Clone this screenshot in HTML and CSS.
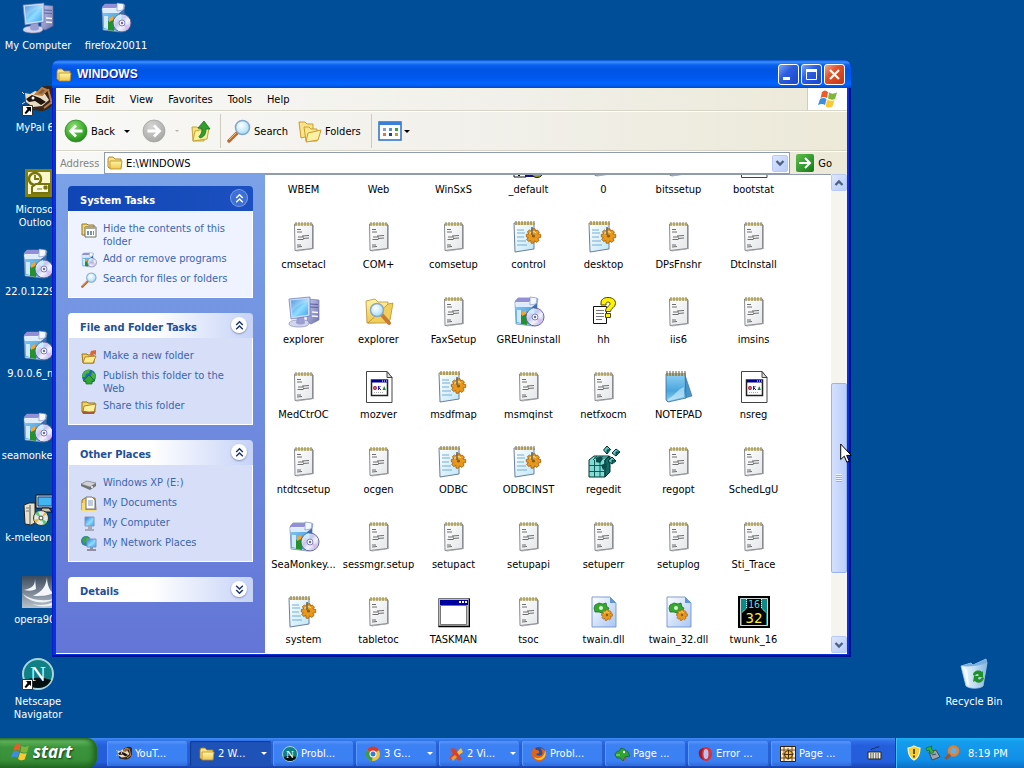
FILE: index.html
```html
<!DOCTYPE html>
<html lang="en">
<head>
    <meta charset="UTF-8">
    <meta name="viewport" content="width=device-width, initial-scale=1.0">
    <title>WINDOWS</title>
    <link rel="stylesheet" href="styles.css">
</head>
<body>
    <!-- shared icons -->
    <svg class="sprite" aria-hidden="true">
        <defs>
            <linearGradient id="gScreen" x1="0" y1="0" x2="1" y2="1"><stop offset="0" stop-color="#1f78d8"/><stop offset=".55" stop-color="#8fdcff"/><stop offset="1" stop-color="#3fa2ee"/></linearGradient>
            <linearGradient id="gCase" x1="0" y1="0" x2="1" y2="1"><stop offset="0" stop-color="#c9ccf0"/><stop offset="1" stop-color="#6c70a8"/></linearGradient>
            <linearGradient id="gFolder" x1="0" y1="0" x2="0" y2="1"><stop offset="0" stop-color="#fff6a8"/><stop offset="1" stop-color="#f0c64c"/></linearGradient>
            <linearGradient id="gPaper" x1="0" y1="0" x2="1" y2="1"><stop offset="0" stop-color="#ffffff"/><stop offset="1" stop-color="#e4e6e8"/></linearGradient>
            <linearGradient id="gIni" x1="0" y1="0" x2="1" y2="1"><stop offset="0" stop-color="#ffffff"/><stop offset="1" stop-color="#bfe6f8"/></linearGradient>
            <linearGradient id="gNote" x1="0" y1="0" x2="0" y2="1"><stop offset="0" stop-color="#8fd0f4"/><stop offset=".6" stop-color="#4aa5dc"/><stop offset="1" stop-color="#8ecdf0"/></linearGradient>
            <linearGradient id="gDisc" x1="0" y1="0" x2="1" y2="1"><stop offset="0" stop-color="#ffffff"/><stop offset=".4" stop-color="#c5c6ee"/><stop offset=".6" stop-color="#f4f4ff"/><stop offset="1" stop-color="#9b9bd0"/></linearGradient>
            <linearGradient id="gBox" x1="0" y1="0" x2="1" y2="1"><stop offset="0" stop-color="#7cc4f0"/><stop offset="1" stop-color="#3f92d8"/></linearGradient>
            <linearGradient id="gDll" x1="0" y1="0" x2="1" y2="1"><stop offset="0" stop-color="#ffffff"/><stop offset="1" stop-color="#a9c6f6"/></linearGradient>
            <linearGradient id="gBin" x1="0" y1="0" x2="1" y2="0"><stop offset="0" stop-color="#f5fbff"/><stop offset=".5" stop-color="#c4dff2"/><stop offset="1" stop-color="#86b8e0"/></linearGradient>
            <linearGradient id="gIs" x1="0" y1="0" x2="0" y2="1"><stop offset="0" stop-color="#3b4a5c"/><stop offset="1" stop-color="#b9c2cc"/></linearGradient>
            <radialGradient id="gGreen" cx=".4" cy=".3" r=".8"><stop offset="0" stop-color="#8be070"/><stop offset=".6" stop-color="#3dab2c"/><stop offset="1" stop-color="#1d7c17"/></radialGradient>
            <radialGradient id="gGrey" cx=".4" cy=".3" r=".8"><stop offset="0" stop-color="#d6d6d4"/><stop offset="1" stop-color="#a2a2a0"/></radialGradient>
            <radialGradient id="gLens" cx=".4" cy=".35" r=".7"><stop offset="0" stop-color="#ffffff"/><stop offset="1" stop-color="#9fdcf6"/></radialGradient>
        </defs>

        <symbol id="computer" viewBox="0 0 32 32">
            <path d="M20 3l11 1v20l-8 4-4-2z" fill="url(#gCase)" stroke="#6a6ea0" stroke-width=".6"/>
            <path d="M22 8l8 .5M22 11l8 .5" stroke="#5c60a0" stroke-width="1"/>
            <path d="M24 16l6 .5M24 20l6 .5" stroke="#f4f5ff" stroke-width="1.600"/>
            <path d="M1 28c0-3 4-4 10-4s10 0 10 3-5 4-10 4-10-1-10-3z" fill="#d3d5ee" stroke="#787ba8" stroke-width=".6"/>
            <path d="M9 20h7l1 7c-2 2-7 2-9 0z" fill="#9a9ed0"/>
            <path d="M1 3l21-2v19L3 23z" fill="#cfdcf8" stroke="#5a72b4" stroke-width=".7"/>
            <path d="M3 4.500l17-1.500v15.500L4.500 21z" fill="url(#gScreen)"/>
            <path d="M3 4.500l17-1.500v3C13 7 8 10 4.500 16z" fill="#fff" opacity=".25"/>
        </symbol>
        <symbol id="installer" viewBox="0 0 32 32">
            <path d="M2 6L5 2h15l5 1-1 5v20l-4 2L3 28z" fill="#e6effc" stroke="#5f7cae" stroke-width=".7"/>
            <path d="M3 11h16v18L3 27z" fill="url(#gBox)"/>
            <path d="M19 11l5-4v20l-5 3z" fill="#3c70b4"/>
            <path d="M2 5l3-3h14l-3 4H2z" fill="#938fd6"/>
            <path d="M2 7h16l1 4H3z" fill="#dcecff"/>
            <path d="M17 1l7 1-1 6-6 1z" fill="#f4f8ff" stroke="#6f88bc" stroke-width=".6"/>
            <path d="M4 14v12l4 1V14z" fill="#cfeaff"/>
            <path d="M8 19l6-2v12l-6-1z" fill="#24922c"/><path d="M9 16l4-2v4l-4 2z" fill="#f5a42c"/>
            <circle cx="22" cy="21" r="9" fill="url(#gDisc)" stroke="#5a5c94" stroke-width=".9"/>
            <path d="M22 21l-6-6a9 9 0 0 1 5-3z" fill="#c8f0ff" opacity=".9"/><path d="M22 21l5 7a9 9 0 0 0 3-4z" fill="#d9b8f0" opacity=".8"/>
            <circle cx="22" cy="21" r="3" fill="#f8f8ff" stroke="#7577ac" stroke-width=".9"/><circle cx="22" cy="21" r="1.200" fill="#6a6ca0"/>
        </symbol>
        <symbol id="text" viewBox="0 0 32 32">
            <path d="M8 30l17-2.500V4h.8v24L9 30.500z" fill="#a5a7aa"/>
            <path d="M6.500 3h18v24.500L7 29.500z" fill="url(#gPaper)" stroke="#7c7f84" stroke-width=".9"/>
            <path d="M7 2h17v2.500H7z" fill="#d8cf8c"/>
            <path d="M8 1v4M11 1v4M14 1v4M17 1v4M20 1v4M23 1v4" stroke="#7e7448" stroke-width=".9"/>
            <path d="M9 8.500h4M9 11h5M10 16h6M14 15l7-.5M9.500 18.500h6M15 17.500l6-.5M9 24h4M9 26l5-.5" stroke="#4b4b4b" stroke-width=".8"/>
        </symbol>
        <symbol id="gear" viewBox="0 0 20 20">
            <path d="M8 1h4l.5 3 2-1.500 3 2.500-2 2.500 3.500.5v4l-3.500.5 1.500 3-3 2.500-2.500-2L10 19H7l-.5-3.500L4 17l-2.500-3 2-2L1 11V8l3-.5L2.500 4.500l2.500-2 2.500 2z" fill="#e8991c" stroke="#9c5a0c" stroke-width="1"/>
            <path d="M5 7c2-3 6-3 8-1" stroke="#ffd868" stroke-width="1.500" fill="none"/>
            <circle cx="10" cy="10" r="2" fill="#8f5a14"/>
        </symbol>
        <symbol id="ini" viewBox="0 0 32 32">
            <path d="M1 2h20v26L2 31z" fill="url(#gIni)" stroke="#6c7f9a" stroke-width="1"/>
            <path d="M2 1h19v3H2z" fill="#e1cf8c"/>
            <path d="M3 0v4M6 0v4M9 0v4M12 0v4M15 0v4M18 0v4M21 0v4" stroke="#776b48"/>
            <path d="M4 9h7M4 12h8M4 16h7M4 20h9M4 24h10" stroke="#72add2"/>
            <use href="#gear" x="11" y="7" width="19" height="16"/>
            <path d="M19 6v8" stroke="#666" stroke-width="1.500"/>
        </symbol>
        <symbol id="search-folder" viewBox="0 0 32 32">
            <path d="M3 5l9-2 3 3h10v20L4 27z" fill="url(#gFolder)" stroke="#b98e2e" stroke-width=".8"/>
            <path d="M25 8l5-1-3 17-4 3H5z" fill="#f1cf5c" stroke="#b98e2e" stroke-width=".8"/>
            <path d="M19 19l7 8" stroke="#c77a32" stroke-width="4" stroke-linecap="round"/>
            <circle cx="14" cy="14" r="6.500" fill="url(#gLens)" stroke="#8ba7c4" stroke-width="1.500"/>
        </symbol>
        <symbol id="help-file" viewBox="0 0 32 32">
            <path d="M5.500 10.500h13v17h-13z" fill="#fff" stroke="#111"/>
            <path d="M8 14.500h8M8 17.500h8M8 20.500h8M8 23.500h6" stroke="#777"/>
            <path d="M13 7c0-3 2-5.500 7-5.500s7.500 2.500 7.500 6c0 4-5 4.500-5 8h-5c0-5 4.500-5 4.500-8 0-2-4-2-4 .5v1h-5zM17.500 17.500h5v4h-5z" fill="#fff200" stroke="#4a4500" stroke-width="1"/>
        </symbol>
        <symbol id="setup-file" viewBox="0 0 32 32">
            <path d="M3.500.5H24l5 6v25H3.500z" fill="#fff" stroke="#444"/>
            <path d="M24 .5v6h5z" fill="#ddd" stroke="#444"/>
            <path d="M8.500 9h16v15.500h-16z" fill="#fff" stroke="#222" stroke-width="1.500"/>
            <path d="M9 9h15v2.500H9z" fill="#000091"/><path d="M19 10h1M21 10h1M23 10h1" stroke="#fff"/>
            <circle cx="12" cy="17" r="1.300" fill="none" stroke="#a80020" stroke-width="1.200"/><path d="M15.500 15v4M15.500 17l2-2M16 17l2 2" stroke="#1a1ac0" stroke-width="1"/><path d="M19.500 19l1.700-4 1.700 4z" fill="#118838"/>
            <path d="M11 21.500h10" stroke="#aaa" stroke-dasharray="1 1"/>
        </symbol>
        <symbol id="notepad" viewBox="0 0 32 32">
            <path d="M22 4l7 21-7 2z" fill="#4c93c8" stroke="#31709f" stroke-width=".6"/>
            <path d="M3 3h19l1 24-18 4-2-2z" fill="url(#gNote)" stroke="#346f9a" stroke-width=".8"/>
            <path d="M5 28c6-3 10-10 16-12v10L5 30z" fill="#d7f4ff" opacity=".6"/>
            <path d="M3 2h20v3H3z" fill="#b8b38b"/><path d="M4 0v5M7 0v5M10 0v5M13 0v5M16 0v5M19 0v5M22 0v5" stroke="#5d5b43"/>
        </symbol>
        <symbol id="regedit" viewBox="0 0 32 32">
            <path d="M1 14l5-4h15l-4 4v17H1z" fill="#7fdcd6" stroke="#06302e"/>
            <path d="M17 14l5-4v16l-5 5z" fill="#0f6e69" stroke="#06302e"/>
            <path d="M1 19.500h16l5-4M1 25.500h16l5-5M6.500 14v17M12 14v17M6 12h13M9 10l-4 4M15 10l-4 4" stroke="#135a56" fill="none"/>
            <path d="M8 12l5-2 2 3-3 4-4-1zM13 19l5-2 1 4-4 3z" fill="#0a4f4b"/>
            <path d="M19 0l3.500 3.500L19 8l-3.500-4zM28 3l4 3-4 4-4-3zM24 11l4 4-4 3-4-3z" fill="#5cc9c2" stroke="#06302e"/>
            <path d="M19 8V4l3.500-.5M28 10V6h4M24 18v-4l4 1" fill="#0f6e69" stroke="#06302e" stroke-width=".8"/>
        </symbol>
        <symbol id="app-window" viewBox="0 0 32 32">
            <path d="M.5 2.500h31v28H.5z" fill="#bdbdbd" stroke="#777"/><path d="M31.500 2.500v28H.5" stroke="#000" stroke-width="1.500" fill="none"/>
            <path d="M2 4h28v5H2z" fill="#0000a0"/><path d="M21 5h2v2h-2zM24 5h2v2h-2zM27 5h2v2h-2z" fill="#fff"/>
            <path d="M2.500 9.500h26v19h-26z" fill="#fff" stroke="#777"/>
        </symbol>
        <symbol id="dll" viewBox="0 0 32 32">
            <path d="M4 1h18l6 6v24H4z" fill="url(#gDll)" stroke="#7394c8" stroke-width=".9"/>
            <path d="M22 1v6h6z" fill="#5b98d8"/>
            <path d="M7 9l4-2 4 1 3-1 1 4 2 1-2 4-5 1-3-1-4 0-1-4z" fill="#36a832" stroke="#1c7420" stroke-width=".8"/><circle cx="13" cy="12" r="2" fill="#d8f4d0"/>
            <use href="#gear" x="13" y="13" width="12" height="12"/>
        </symbol>
        <symbol id="twunk" viewBox="0 0 32 32">
            <path d="M1 1h30v30H1z" fill="#0d8a86" stroke="#000" stroke-width="2"/><path d="M2.500 2.500h27v27h-27z" fill="none" stroke="#c9d6d4"/>
            <path d="M9 3h14v9l5 5v12H4V17l5-5z" fill="#000"/>
            <path d="M8.500 3v9l-5 5M23.500 3v9l5 5" stroke="#cfd" stroke-dasharray="1 1" fill="none"/>
        </symbol>
        <symbol id="pif" viewBox="0 0 32 32">
            <path d="M1 14h12v17H1z" fill="#fff" stroke="#111"/><path d="M12 14h12v17H12z" fill="#12128e"/><circle cx="24" cy="25" r="6.500" fill="#a8a81a" stroke="#111"/><path d="M2 27l4-4 4 4M6 24v6" stroke="#111" stroke-width="2" fill="none"/>
        </symbol>
        <symbol id="folder" viewBox="0 0 16 16">
            <path d="M1 4l1-2h4l2 2h6v9H2L1 12z" fill="#f9e284" stroke="#a97e1e" stroke-width=".9"/>
            <path d="M3 6h12l-1 8H3z" fill="url(#gFolder)" stroke="#b98a22" stroke-width=".8"/>
        </symbol>
        <symbol id="shortcut" viewBox="0 0 11 11">
            <path d="M.5.500h10v10H.5z" fill="#fff" stroke="#333"/><path d="M4 2h5v5L7.500 5.500 4 9 2.500 8 5.500 4z" fill="#000"/>
        </symbol>
        <symbol id="raccoon" viewBox="0 0 32 32">
            <path d="M14 8c5-7 14-8 18-4v14c-4 8-12 11-18 8-6 1-9-2-8-6z" fill="#3a2618"/>
            <path d="M3 9l5 1 5-3 10 3 4 6-7 6-9 1-7-5z" fill="#e9dcc4"/>
            <path d="M4 15l6-4 8 3 6 4-5 3-6-4-6 1z" fill="#21150f"/>
            <path d="M14 10l6-6 5 2-5 5zM26 5l4 15M22 24l8-6" stroke="#b77e47" stroke-width="2" fill="#8a5c34"/>
            <circle cx="11" cy="14" r="1.500" fill="#fff"/><path d="M2 10l-2-2M3 18l-3 2" stroke="#ddd"/>
        </symbol>
        <symbol id="outlook" viewBox="0 0 32 32">
            <path d="M3 3h28v28H3z" fill="#827f10"/><path d="M6 6h22v22H6z" fill="#fbf6c8"/>
            <circle cx="13" cy="13" r="6" fill="#fffde0" stroke="#77740c" stroke-width="2.500"/><path d="M13 9v4h4" stroke="#77740c" stroke-width="1.800" fill="none"/>
            <path d="M14 18h13v9H10v-6z" fill="#fffde0" stroke="#77740c" stroke-width="2"/><path d="M22 20h3v3h-3zM15 23h5" fill="#77740c" stroke="#77740c"/>
        </symbol>
        <symbol id="kmeleon" viewBox="0 0 32 32">
            <path d="M2 11l5-2h6v20l-4 2-6-1z" fill="#e6e2d0" stroke="#222"/><path d="M8 11v19" stroke="#555"/><path d="M4 14h3M4 17h3" stroke="#777"/>
            <path d="M14 1h18v13H14z" fill="#d9d5c8" stroke="#111"/><path d="M16 3h14v9H16z" fill="#41b6f0" stroke="#11489a"/>
            <path d="M20 14h7l3 4H18z" fill="#c8c4b4" stroke="#111"/>
            <circle cx="19" cy="24" r="7.500" fill="#e3e9e0" stroke="#333"/><path d="M19 24l-6-4 3-3zM19 24l6 4-3 3z" fill="#5cc879"/><path d="M19 24l4-6 2 2zM19 24l-5 5-2-3z" fill="#e9b93e"/><circle cx="19" cy="24" r="2" fill="#fff" stroke="#444"/>
        </symbol>
        <symbol id="sails" viewBox="0 0 32 32">
            <path d="M0 0h32v32H0z" fill="url(#gIs)"/><path d="M13 3c0 6-2 9-11 11 5 1 9 1 12-1zM25 1c-1 9-4 14-14 19 8 0 15 0 20-3-4-3-6-9-6-16z" fill="#f4f7fa"/><path d="M1 18c6 5 18 8 31 5-8 6-25 4-31-5zM10 28c8 2 15 1 22-2v3c-7 2-16 2-22-1z" fill="#eef2f5"/>
        </symbol>
        <symbol id="netscape" viewBox="0 0 32 32">
            <circle cx="16" cy="16" r="15" fill="#0f8184" stroke="#a9d4dc" stroke-width="2"/>
            <path d="M3 22c8-3 18-3 26 0-2 5-7 8-13 8S5 27 3 22z" fill="#04100f"/>
        </symbol>
        <symbol id="bin" viewBox="0 0 32 32">
            <path d="M3 8l10-3 2 2 13-6 1 4-4 23c-4 3-13 3-17 0z" fill="url(#gBin)" stroke="#a3cbea" stroke-width=".8"/>
            <path d="M3 8c6 1 18 0 26-3l-1-4-13 6-2-2z" fill="#79afe0"/><path d="M8 11l2 16" stroke="#fff" stroke-width="2" opacity=".8"/>
            <path d="M15 17c0-4 6-6 9-3l1-1v6h-6l2-2c-2-2-3-1-4 1zM26 20c-1 5-7 6-9 3l-2 1 1-6h5l-1 3c2 1 3 0 4-2z" fill="#1f9128"/>
        </symbol>
        <symbol id="flag" viewBox="0 0 20 18">
            <path d="M4 2c2-2 4-2 6 0L9 8C7 6.500 5 6.500 2.500 8z" fill="#ea5b2c"/><path d="M11 2.500c2 1.500 5 1.500 8 0l-2 6.500c-2 1-5 1-7-.5z" fill="#7db63a"/>
            <path d="M2 9c2-1.500 5-1.500 6.500 0L7 15c-2-1.500-4-1.500-7 0z" fill="#3d8de0"/><path d="M9.500 9.500c2 1.500 5 1.500 7 .5l-2 6.500c-2 1.500-5 1.500-7-.5z" fill="#fac832"/>
        </symbol>
        <symbol id="back" viewBox="0 0 24 24">
            <circle cx="12" cy="12" r="11" fill="url(#gGreen)" stroke="#2f8a2a" stroke-width=".8"/><path d="M18.500 12H7M12 6.500L6.500 12l5.500 5.500" stroke="#fff" stroke-width="2.800" fill="none"/>
        </symbol>
        <symbol id="forward" viewBox="0 0 24 24">
            <circle cx="12" cy="12" r="11" fill="url(#gGrey)" stroke="#a5a5a3" stroke-width=".8"/><path d="M5.500 12H17M12 6.500l5.500 5.500-5.500 5.500" stroke="#fff" stroke-width="2.800" fill="none"/>
        </symbol>
        <symbol id="up" viewBox="0 0 24 24">
            <path d="M3 8h5l2 2h5v12H4z" fill="#f6e27c" stroke="#c8a43a"/><path d="M6 12l14-3-2 11-14 2z" fill="#fbf09c" stroke="#c8a43a"/>
            <path d="M11 19c4-1 6-4 6-9h4l-6-8-6 7 4 .5c0 4-1 6-3 8z" fill="#2fa02c" stroke="#19701a" stroke-width=".8"/>
        </symbol>
        <symbol id="lens" viewBox="0 0 24 24">
            <path d="M10 14l-8 8" stroke="#b8692e" stroke-width="3.500" stroke-linecap="round"/><path d="M9 14l-7 7" stroke="#f0b27a" stroke-width="1"/>
            <circle cx="15.500" cy="8.500" r="7" fill="url(#gLens)" stroke="#86a7cc" stroke-width="1.600"/>
        </symbol>
        <symbol id="folders" viewBox="0 0 24 24">
            <path d="M1 3h6l2 2h6v11L3 19z" fill="#f9e48a" stroke="#c99c30"/><path d="M6 8h5l2 2h6v12H8z" fill="#fae78e" stroke="#c99c30"/><path d="M10 14l13-3-3 10-12 2z" fill="#fdf2a4" stroke="#c99c30"/>
        </symbol>
        <symbol id="views" viewBox="0 0 24 20">
            <path d="M1 1h22v18H1z" fill="#fff" stroke="#2a6fc4" stroke-width="1.500"/><path d="M1 1h22v3H1z" fill="#3a80d8"/>
            <path d="M5 7h3v3H5z" fill="#8b9ec0"/><path d="M11 7h3v3h-3z" fill="#5c8ee0"/><path d="M17 7h3v3h-3z" fill="#3aa03a"/><path d="M5 12h3v3H5z" fill="#e0743a"/><path d="M11 12h3v3h-3z" fill="#1d3fa0"/><path d="M17 12h3v3h-3z" fill="#c89a2c"/>
        </symbol>
        <symbol id="chevron-down" viewBox="0 0 10 8"><path d="M1.500 2L5 5.500 8.500 2" fill="none" stroke="#4d6185" stroke-width="2.400"/></symbol>
        <symbol id="chevron-up" viewBox="0 0 10 8"><path d="M1.500 6L5 2.500 8.500 6" fill="none" stroke="#4d6185" stroke-width="2.400"/></symbol>
        <symbol id="double-up" viewBox="0 0 10 10"><path d="M2 4.500l3-3 3 3M2 8.500l3-3 3 3" fill="none" stroke="currentColor" stroke-width="1.300"/></symbol>
        <symbol id="double-down" viewBox="0 0 10 10"><path d="M2 1.500l3 3 3-3M2 5.500l3 3 3-3" fill="none" stroke="currentColor" stroke-width="1.300"/></symbol>

        <symbol id="s-hide" viewBox="0 0 16 16"><path d="M1 2h5l1 1h6v10H1z" fill="#f4d870" stroke="#987426"/><path d="M4 5h11v10H4z" fill="#fff" stroke="#6d6d62"/><path d="M4 5h11v2H4z" fill="#a5a89a"/><path d="M6 9h2v4H6zM9 9h2v4H9zM12 9h1v4h-1z" fill="#7890a8"/></symbol>
        <symbol id="s-share" viewBox="0 0 16 16"><path d="M1 3h5l1 1h7v9H1z" fill="#f4d562" stroke="#94701e"/><path d="M3 7l12-2-2 8H2z" fill="#fdf09a" stroke="#94701e" stroke-width=".8"/><path d="M1 13c3-2 5 0 7 0s4-1 6 0l-1 2H2z" fill="#a45a32"/></symbol>
        <symbol id="s-new" viewBox="0 0 16 16"><path d="M1 5h5l1 1h6v8H2z" fill="#f6cc5a" stroke="#9c741c"/><path d="M4 8l11-1-3 7H2z" fill="#fdeb90" stroke="#9c741c" stroke-width=".8"/><path d="M10 2l5-1v5l-2-1-3 2-1-2z" fill="#e2642a"/></symbol>
        <symbol id="s-globe" viewBox="0 0 16 16"><circle cx="8" cy="7.500" r="7" fill="#2467b8"/><path d="M2 4c2-3 5-4 7-3L8 4 5 5 4 8 1 8zM11 3l3 2 1 4-3 1-2-3z" fill="#42b53c"/><path d="M8 6l6 6h-3v3H5v-3H2z" fill="#32a832" stroke="#126a20" stroke-width=".7"/></symbol>
        <symbol id="s-drive" viewBox="0 0 16 16"><path d="M0 8l6-3 9 2v3l-6 4-9-4z" fill="#6f7276"/><path d="M0 8l6-3 9 2-6 4z" fill="#d0d2d5" stroke="#777" stroke-width=".5"/><circle cx="11" cy="11" r="1" fill="#fff"/></symbol>
        <symbol id="s-docs" viewBox="0 0 16 16"><path d="M1 4l3-2h10l1 12H1z" fill="#f3cf5c" stroke="#98731e"/><path d="M5 1h6l3 3v9H5z" fill="#fff" stroke="#777"/><path d="M7 5h5M7 7h5M7 9h5" stroke="#7d98b8"/><path d="M1 7h3v7h11v1H1z" fill="#f7dc74"/></symbol>
        <symbol id="s-pc" viewBox="0 0 16 16"><path d="M4 1h9v9H4z" fill="url(#gScreen)" stroke="#8094c4"/><path d="M7 10h4v3H7zM4 13h9v2H4z" fill="#a5a8b8"/></symbol>
        <symbol id="s-net" viewBox="0 0 16 16"><circle cx="5" cy="5" r="5" fill="#2c7dbe"/><path d="M1 3l4-3 3 2-3 4-2 3z" fill="#3aa83a"/><path d="M6 3h9v8H6z" fill="url(#gScreen)" stroke="#8094c4"/><path d="M9 11h3v2H9zM6 13h9v2H6z" fill="#8c90a6"/></symbol>

        <symbol id="t-chrome" viewBox="0 0 16 16"><circle cx="8" cy="8" r="7" fill="#f1c430"/><path d="M8 8L2 4a7 7 0 0 1 12 0z" fill="#d93a2c"/><path d="M8 8L2 4a7 7 0 0 0 5 11z" fill="#3a9c48"/><circle cx="8" cy="8" r="3.500" fill="#fff"/><circle cx="8" cy="8" r="2.500" fill="#3c78d8"/></symbol>
        <symbol id="t-seamonkey" viewBox="0 0 16 16"><path d="M2 3l4-1 4 4 3-3 2 3-4 3 3 4-3 2-4-4-3 3-3-2 4-4z" fill="#d8402c"/><path d="M9 6l4-4 2 4-4 3z" fill="#f2c43c"/><path d="M3 12l4-3 2 2-4 4z" fill="#e8a02c"/></symbol>
        <symbol id="t-firefox" viewBox="0 0 16 16"><circle cx="8" cy="8" r="7" fill="#2a4f9c"/><path d="M1 5c1-2 2-3 3-3l1 2c2 0 4 1 3 3l-3 1c1 2 4 2 6 1 1-3 0-5-2-7 5 1 7 5 6 8-2 6-9 7-12 3C1 11 0 8 1 5z" fill="#e0641a"/><path d="M14 4c2 4 0 9-5 10-3 0-5-1-6-3 5 3 11 0 11-7z" fill="#fbc23a"/></symbol>
        <symbol id="t-dragon" viewBox="0 0 16 16"><path d="M1 9c0-4 5-3 6-7l3 1 4 3 2 4-5 1-2 4-3-3-3 0z" fill="#2fa232" stroke="#0d5a1c" stroke-width=".7"/><circle cx="10" cy="6" r="1.200" fill="#fff"/><path d="M11 11l2 4-3-2z" fill="#d2412b"/><path d="M2 9h4" stroke="#a0e07a"/></symbol>
        <symbol id="t-opera" viewBox="0 0 16 16"><ellipse cx="9" cy="8" rx="6" ry="7" fill="#d8303a"/><ellipse cx="9" cy="8" rx="2.500" ry="5" fill="#b8c4f0"/><path d="M2 5c2-3 4-3 5-3-3 3-3 9 0 12-4-1-6-5-5-9z" fill="#a01824"/></symbol>
        <symbol id="t-lizard" viewBox="0 0 16 16"><path d="M.5.500h15v15H.5z" fill="#f8eccc" stroke="#33220c"/><path d="M4 1v14M8 2v12M12 1v14M1 4h14M2 8h12M1 12h14" stroke="#7a4a16"/><circle cx="8.500" cy="8.500" r="4" fill="#f6be3c" stroke="#4a2c08"/><path d="M8.500 4v9M4 8.500h9" stroke="#4a2c08"/></symbol>
        <symbol id="t-keyboard" viewBox="0 0 16 16"><path d="M2 7h13v7H2z" fill="#f4f2e4" stroke="#222"/><path d="M4 9h9M4 11h9M4 13h9" stroke="#222" stroke-dasharray="1.500 1"/><path d="M5 5c1-3 3 0 4-2s3 1 4-2" stroke="#152a60" fill="none"/></symbol>
        <symbol id="t-shield" viewBox="0 0 16 16"><path d="M8 1c2 1 4 2 6 2 0 6-2 10-6 12-4-2-6-6-6-12 2 0 4-1 6-2z" fill="#f7cf2e" stroke="#f6f2cc" stroke-width="1.200"/><path d="M8 4v5M8 10.500v2" stroke="#3c3208" stroke-width="1.600"/></symbol>
        <symbol id="t-usb" viewBox="0 0 16 16"><path d="M4 7l7-2 4 7-8 3z" fill="#9aa6ae" stroke="#3f4a56"/><path d="M7 10l4-1" stroke="#3f4a56"/><path d="M1 3l6-2-1 2 3 4-3 2-2-4-2 1z" fill="#36b23a" stroke="#106a20" stroke-width=".7"/></symbol>
        <symbol id="t-find" viewBox="0 0 16 16"><circle cx="9.500" cy="6" r="4.500" fill="#5eaee8" stroke="#f07d22" stroke-width="2.600"/><path d="M6 9.500L1.500 14" stroke="#b04c1c" stroke-width="2.800"/></symbol>
    </svg>

    <main class="desktop">
        <div class="shortcuts">
            <a href="#" class="shortcut"><svg class="icon-lg"><use href="#computer"/></svg><span>My Computer</span></a>
            <a href="#" class="shortcut"><svg class="icon-lg"><use href="#raccoon"/><use href="#shortcut" y="21" width="11" height="11"/></svg><span>MyPal 68</span></a>
            <a href="#" class="shortcut"><svg class="icon-lg"><use href="#outlook"/></svg><span>Microsoft Outlook</span></a>
            <a href="#" class="shortcut"><svg class="icon-lg"><use href="#installer"/></svg><span>22.0.12291...</span></a>
            <a href="#" class="shortcut"><svg class="icon-lg"><use href="#installer"/></svg><span>9.0.0.6_ne...</span></a>
            <a href="#" class="shortcut"><svg class="icon-lg"><use href="#installer"/></svg><span>seamonkey2...</span></a>
            <a href="#" class="shortcut"><svg class="icon-lg"><use href="#kmeleon"/></svg><span>k-meleon-1...</span></a>
            <a href="#" class="shortcut"><svg class="icon-lg"><use href="#sails"/></svg><span>opera902</span></a>
            <a href="#" class="shortcut"><svg class="icon-lg" viewBox="0 0 32 32"><use href="#netscape"/><text x="16" y="23" class="serif-n">N</text><use href="#shortcut" y="21" width="11" height="11"/></svg><span>Netscape Navigator</span></a>
            <a href="#" class="shortcut"><svg class="icon-lg"><use href="#installer"/></svg><span>firefox20011</span></a>
        </div>
        <a href="#" class="shortcut recycle"><svg class="icon-lg"><use href="#bin"/></svg><span>Recycle Bin</span></a>

        <section class="window">
            <header class="titlebar">
                <svg class="icon-sm"><use href="#folder"/></svg>
                <h1>WINDOWS</h1>
                <button class="win-btn" aria-label="Minimize"><svg viewBox="0 0 19 19"><path d="M4 12h7v3H4z" fill="#fff"/></svg></button>
                <button class="win-btn" aria-label="Maximize"><svg viewBox="0 0 19 19"><path d="M4.500 5h10v9.500h-10z" fill="none" stroke="#fff"/><path d="M4 4h11v3H4z" fill="#fff"/></svg></button>
                <button class="win-btn close" aria-label="Close"><svg viewBox="0 0 19 19"><path d="M5 5l9 9M14 5l-9 9" stroke="#fff" stroke-width="2.200"/></svg></button>
            </header>

            <div class="window-body">
                <nav class="menubar">
                    <button>File</button>
                    <button>Edit</button>
                    <button>View</button>
                    <button>Favorites</button>
                    <button>Tools</button>
                    <button>Help</button>
                    <div class="brand"><svg><use href="#flag"/></svg></div>
                </nav>

                <div class="toolbar">
                    <button class="tool tool-back"><svg class="icon-md"><use href="#back"/></svg>Back<i class="caret"></i></button>
                    <button class="tool tool-forward" aria-label="Forward" disabled><svg class="icon-md"><use href="#forward"/></svg><i class="caret small"></i></button>
                    <button class="tool tool-up" aria-label="Up"><svg class="icon-md"><use href="#up"/></svg></button>
                    <span class="divider"></span>
                    <button class="tool"><svg class="icon-md"><use href="#lens"/></svg>Search</button>
                    <button class="tool"><svg class="icon-md"><use href="#folders"/></svg>Folders</button>
                    <span class="divider"></span>
                    <button class="tool tool-views" aria-label="Views"><svg class="icon-md"><use href="#views"/></svg><i class="caret"></i></button>
                </div>

                <div class="addressbar">
                    <label for="address">Address</label>
                    <div class="combo">
                        <svg class="icon-sm"><use href="#folder"/></svg>
                        <input id="address" type="text" value="E:\WINDOWS">
                        <button class="xp-btn" aria-label="Show addresses"><svg><use href="#chevron-down"/></svg></button>
                    </div>
                    <button class="go"><svg viewBox="0 0 18 18"><path d="M3 9h11M9 4l5 5-5 5" fill="none" stroke="#fff" stroke-width="2"/></svg>Go</button>
                </div>

                <div class="content">
                    <aside class="sidebar">
                        <section class="pane primary">
                            <h2>System Tasks <button aria-label="Collapse"><svg><use href="#double-up"/></svg></button></h2>
                            <ul>
                                <li><svg class="icon-sm"><use href="#s-hide"/></svg><a href="#">Hide the contents of this folder</a></li>
                                <li><svg class="icon-sm"><use href="#installer"/></svg><a href="#">Add or remove programs</a></li>
                                <li><svg class="icon-sm"><use href="#lens"/></svg><a href="#">Search for files or folders</a></li>
                            </ul>
                        </section>
                        <section class="pane">
                            <h2>File and Folder Tasks <button aria-label="Collapse"><svg><use href="#double-up"/></svg></button></h2>
                            <ul>
                                <li><svg class="icon-sm"><use href="#s-new"/></svg><a href="#">Make a new folder</a></li>
                                <li><svg class="icon-sm"><use href="#s-globe"/></svg><a href="#">Publish this folder to the Web</a></li>
                                <li><svg class="icon-sm"><use href="#s-share"/></svg><a href="#">Share this folder</a></li>
                            </ul>
                        </section>
                        <section class="pane">
                            <h2>Other Places <button aria-label="Collapse"><svg><use href="#double-up"/></svg></button></h2>
                            <ul>
                                <li><svg class="icon-sm"><use href="#s-drive"/></svg><a href="#">Windows XP (E:)</a></li>
                                <li><svg class="icon-sm"><use href="#s-docs"/></svg><a href="#">My Documents</a></li>
                                <li><svg class="icon-sm"><use href="#s-pc"/></svg><a href="#">My Computer</a></li>
                                <li><svg class="icon-sm"><use href="#s-net"/></svg><a href="#">My Network Places</a></li>
                            </ul>
                        </section>
                        <section class="pane">
                            <h2>Details <button aria-label="Expand"><svg><use href="#double-down"/></svg></button></h2>
                        </section>
                    </aside>

                    <div class="files">
                        <ul class="file-grid">
                            <li><svg class="icon-lg"><use href="#folder"/></svg>WBEM</li>
                            <li><svg class="icon-lg"><use href="#folder"/></svg>Web</li>
                            <li><svg class="icon-lg"><use href="#folder"/></svg>WinSxS</li>
                            <li><svg class="icon-lg"><use href="#pif"/></svg>_default</li>
                            <li><svg class="icon-lg"><use href="#text"/></svg>0</li>
                            <li><svg class="icon-lg"><use href="#text"/></svg>bitssetup</li>
                            <li><svg class="icon-lg"><use href="#setup-file"/></svg>bootstat</li>

                            <li><svg class="icon-lg"><use href="#text"/></svg>cmsetacl</li>
                            <li><svg class="icon-lg"><use href="#text"/></svg>COM+</li>
                            <li><svg class="icon-lg"><use href="#text"/></svg>comsetup</li>
                            <li><svg class="icon-lg"><use href="#ini"/></svg>control</li>
                            <li><svg class="icon-lg"><use href="#ini"/></svg>desktop</li>
                            <li><svg class="icon-lg"><use href="#text"/></svg>DPsFnshr</li>
                            <li><svg class="icon-lg"><use href="#text"/></svg>DtcInstall</li>

                            <li><svg class="icon-lg"><use href="#computer"/></svg>explorer</li>
                            <li><svg class="icon-lg"><use href="#search-folder"/></svg>explorer</li>
                            <li><svg class="icon-lg"><use href="#text"/></svg>FaxSetup</li>
                            <li><svg class="icon-lg"><use href="#installer"/></svg>GREUninstall</li>
                            <li><svg class="icon-lg"><use href="#help-file"/></svg>hh</li>
                            <li><svg class="icon-lg"><use href="#text"/></svg>iis6</li>
                            <li><svg class="icon-lg"><use href="#text"/></svg>imsins</li>

                            <li><svg class="icon-lg"><use href="#text"/></svg>MedCtrOC</li>
                            <li><svg class="icon-lg"><use href="#setup-file"/></svg>mozver</li>
                            <li><svg class="icon-lg"><use href="#ini"/></svg>msdfmap</li>
                            <li><svg class="icon-lg"><use href="#text"/></svg>msmqinst</li>
                            <li><svg class="icon-lg"><use href="#text"/></svg>netfxocm</li>
                            <li><svg class="icon-lg"><use href="#notepad"/></svg>NOTEPAD</li>
                            <li><svg class="icon-lg"><use href="#setup-file"/></svg>nsreg</li>

                            <li><svg class="icon-lg"><use href="#text"/></svg>ntdtcsetup</li>
                            <li><svg class="icon-lg"><use href="#text"/></svg>ocgen</li>
                            <li><svg class="icon-lg"><use href="#ini"/></svg>ODBC</li>
                            <li><svg class="icon-lg"><use href="#ini"/></svg>ODBCINST</li>
                            <li><svg class="icon-lg"><use href="#regedit"/></svg>regedit</li>
                            <li><svg class="icon-lg"><use href="#text"/></svg>regopt</li>
                            <li><svg class="icon-lg"><use href="#text"/></svg>SchedLgU</li>

                            <li><svg class="icon-lg"><use href="#installer"/></svg>SeaMonkey...</li>
                            <li><svg class="icon-lg"><use href="#text"/></svg>sessmgr.setup</li>
                            <li><svg class="icon-lg"><use href="#text"/></svg>setupact</li>
                            <li><svg class="icon-lg"><use href="#text"/></svg>setupapi</li>
                            <li><svg class="icon-lg"><use href="#text"/></svg>setuperr</li>
                            <li><svg class="icon-lg"><use href="#text"/></svg>setuplog</li>
                            <li><svg class="icon-lg"><use href="#text"/></svg>Sti_Trace</li>

                            <li><svg class="icon-lg"><use href="#ini"/></svg>system</li>
                            <li><svg class="icon-lg"><use href="#text"/></svg>tabletoc</li>
                            <li><svg class="icon-lg"><use href="#app-window"/></svg>TASKMAN</li>
                            <li><svg class="icon-lg"><use href="#text"/></svg>tsoc</li>
                            <li><svg class="icon-lg"><use href="#dll"/></svg>twain.dll</li>
                            <li><svg class="icon-lg"><use href="#dll"/></svg>twain_32.dll</li>
                            <li><svg class="icon-lg" viewBox="0 0 32 32"><use href="#twunk"/><text x="16" y="12" class="digits small">16</text><text x="16" y="27" class="digits">32</text></svg>twunk_16</li>
                        </ul>
                    </div>

                    <div class="scrollbar">
                        <button class="xp-btn" aria-label="Scroll up"><svg><use href="#chevron-up"/></svg></button>
                        <div class="track"><div class="thumb"></div></div>
                        <button class="xp-btn" aria-label="Scroll down"><svg><use href="#chevron-down"/></svg></button>
                    </div>
                </div>
            </div>
        </section>

        <svg class="cursor" viewBox="0 0 12 21"><path d="M.7 1v15.500l3.600-3.300 2.500 6 2.400-1-2.500-5.800h4.500z" fill="#fff" stroke="#000"/></svg>
    </main>

    <footer class="taskbar">
        <button class="start"><svg><use href="#flag"/></svg>start</button>
        <div class="tasks">
            <button class="task"><svg class="icon-sm"><use href="#raccoon"/></svg><span>YouT...</span></button>
            <button class="task active"><svg class="icon-sm"><use href="#folder"/></svg><span>2 W...</span><i class="caret"></i></button>
            <button class="task"><svg class="icon-sm" viewBox="0 0 32 32"><use href="#netscape"/><text x="16" y="23" class="serif-n">N</text></svg><span>Probl...</span></button>
            <button class="task"><svg class="icon-sm"><use href="#t-chrome"/></svg><span>3 G...</span><i class="caret"></i></button>
            <button class="task"><svg class="icon-sm"><use href="#t-seamonkey"/></svg><span>2 Vi...</span><i class="caret"></i></button>
            <button class="task"><svg class="icon-sm"><use href="#t-firefox"/></svg><span>Probl...</span></button>
            <button class="task"><svg class="icon-sm"><use href="#t-dragon"/></svg><span>Page ...</span></button>
            <button class="task"><svg class="icon-sm"><use href="#t-opera"/></svg><span>Error ...</span></button>
            <button class="task"><svg class="icon-sm"><use href="#t-lizard"/></svg><span>Page ...</span></button>
        </div>
        <button class="language" aria-label="Keyboard"><svg class="icon-sm"><use href="#t-keyboard"/></svg></button>
        <div class="tray">
            <svg class="icon-sm"><use href="#t-shield"/></svg>
            <svg class="icon-sm"><use href="#t-usb"/></svg>
            <svg class="icon-sm"><use href="#t-find"/></svg>
            <time>8:19 PM</time>
        </div>
    </footer>
</body>
</html>
```

FILE: styles.css
```css
:root {
    --desktop: #004e98;
    --frame: #0831d9;
    --beige: #ece9d8;
    --link: #3a66b0;
    --ui-font: Tahoma, "DejaVu Sans Condensed", "DejaVu Sans", sans-serif;
}

* {
    box-sizing: border-box;
}

body {
    display: flex;
    flex-direction: column;
    height: 100vh;
    margin: 0;
    overflow: hidden;
    background: var(--desktop);
    font-family: var(--ui-font);
    font-size: 11px;
    line-height: 13px;
    color: #000;
}

h1, h2, ul {
    margin: 0;
    padding: 0;
    list-style: none;
}

a {
    color: inherit;
    text-decoration: none;
}

button, input {
    margin: 0;
    padding: 0;
    border: 0;
    background: none;
    font: inherit;
    color: inherit;
}

svg {
    display: block;
    flex: none;
}

.sprite {
    position: absolute;
    width: 0;
    height: 0;
}

.icon-sm { width: 16px; height: 16px; }
.icon-md { width: 24px; height: 24px; }
.icon-lg { width: 32px; height: 32px; }

.digits {
    font: 14px "DejaVu Sans Mono", monospace;
    text-anchor: middle;
    fill: #ffe93b;
}

.digits.small {
    font-size: 10px;
    fill: #59d7ea;
}

.serif-n {
    font: 22px "Liberation Serif", serif;
    text-anchor: middle;
    fill: #fff;
}

.caret {
    border: 3px solid transparent;
    border-top-color: currentColor;
    border-bottom: 0;
}

.caret.small {
    border-width: 2px;
    border-bottom: 0;
    color: #b5b3a8;
}

/* desktop */
.desktop {
    position: relative;
    flex: 1;
    min-height: 0;
}

.shortcuts {
    display: grid;
    grid-auto-flow: column;
    grid-template-rows: repeat(9, 82px);
    grid-auto-columns: 78px;
    padding-top: 2px;
}

.shortcut {
    display: flex;
    flex-direction: column;
    align-items: center;
    gap: 5px;
    width: 76px;
    color: #fff;
    text-align: center;
}

.recycle {
    position: absolute;
    right: 12px;
    bottom: 30px;
}

.cursor {
    position: absolute;
    left: 840px;
    top: 443px;
    width: 12px;
    height: 21px;
}

/* explorer window */
.window {
    position: absolute;
    top: 60px;
    right: 173px;
    bottom: 81px;
    left: 52px;
    display: flex;
    flex-direction: column;
    padding: 0 4px 3px;
    background: var(--frame);
    border-radius: 7px 7px 0 0;
    box-shadow: inset 1px 0 #0019cf, inset -2px -2px #00138c;
}

.titlebar {
    display: flex;
    align-items: center;
    gap: 2px;
    height: 28px;
    margin: 0 -4px;
    padding: 1px 6px 0 4px;
    border-radius: 7px 7px 0 0;
    background: linear-gradient(#0a50d0 0, #3a93ff 2px, #0a5ff0 5px, #0054e3 10px, #0058ee 18px, #0066ff 24px, #0048cc 28px);
}

.titlebar h1 {
    flex: 1;
    padding-left: 3px;
    font: bold 12px/15px "Trebuchet MS", "Liberation Sans", sans-serif;
    color: #fff;
    text-shadow: 1px 1px #0f1089;
}

.win-btn {
    width: 21px;
    height: 21px;
    border: 1px solid #fff;
    border-radius: 3px;
    background: linear-gradient(135deg, #7ca4f8, #2c5fe0 40%, #1946c8);
}

.win-btn.close {
    background: linear-gradient(135deg, #f3a68e, #e0502c 40%, #c53710);
}

.window-body {
    display: flex;
    flex: 1;
    flex-direction: column;
    min-height: 0;
    background: linear-gradient(90deg, #f8f8f6, #f1f0ea 55%, var(--beige));
}

.menubar {
    display: flex;
    height: 23px;
    border-bottom: 1px solid #d8d5c6;
}

.menubar button {
    padding: 0 7px 0 8px;
}

.brand {
    display: grid;
    place-items: center;
    width: 40px;
    margin-left: auto;
    border-left: 1px solid #d0cdbc;
    background: #fff;
}

.brand svg {
    width: 20px;
    height: 18px;
}

.toolbar {
    display: flex;
    align-items: center;
    height: 40px;
    padding-left: 8px;
    border-top: 1px solid #fff;
    border-bottom: 1px solid #d8d5c6;
}

.tool {
    display: flex;
    align-items: center;
    gap: 3px;
    margin-right: 10px;
}

.tool-back {
    margin-right: 12px;
}

.tool-back .caret {
    margin-left: 6px;
}

.tool-forward {
    gap: 9px;
}

.tool-up {
    margin-right: 7px;
}

.tool-views {
    gap: 2px;
}

.divider {
    align-self: stretch;
    width: 1px;
    margin: 2px 6px 2px 0;
    background: #cfccbd;
}

.addressbar {
    display: flex;
    align-items: center;
    gap: 4px;
    height: 23px;
    padding: 0 15px 0 4px;
    border-top: 1px solid #fff;
}

.addressbar label {
    width: 40px;
    color: #85847c;
}

.combo {
    display: flex;
    flex: 1;
    align-items: center;
    gap: 3px;
    height: 22px;
    padding: 0 1px 0 2px;
    border: 1px solid #8e9cae;
    background: #fff;
}

.combo input {
    flex: 1;
    min-width: 0;
}

.xp-btn {
    display: grid;
    place-items: center;
    width: 16px;
    height: 17px;
    border: 1px solid #b7caf5;
    border-radius: 2px;
    background: linear-gradient(135deg, #dce6fe, #b9ccf8);
}

.xp-btn svg {
    width: 10px;
    height: 8px;
}

.go {
    display: flex;
    align-items: center;
    gap: 4px;
    margin-left: 2px;
}

.go svg {
    width: 18px;
    height: 18px;
    border-radius: 2px;
    background: linear-gradient(135deg, #5fc04c, #14781a);
}

.content {
    display: flex;
    flex: 1;
    min-height: 0;
    border-bottom: 1px solid #fff;
}

/* task panes */
.sidebar {
    display: flex;
    flex: none;
    flex-direction: column;
    gap: 15px;
    width: 209px;
    padding: 12px;
    background: linear-gradient(#7ba2e7, #6375d6);
}

.pane h2 {
    display: flex;
    align-items: center;
    justify-content: space-between;
    height: 25px;
    padding: 3px 6px 0 12px;
    border-radius: 4px 4px 0 0;
    background: linear-gradient(90deg, #fff 45%, #c6d3f7);
    font-size: 11px;
    line-height: 13px;
    color: #215098;
}

.pane h2 button {
    display: grid;
    place-items: center;
    width: 16px;
    height: 16px;
    margin-bottom: 4px;
    border-radius: 50%;
    background: #fff;
    box-shadow: 0 1px 2px #8492b8;
    color: #1c3470;
}

.pane h2 svg {
    width: 11px;
    height: 11px;
}

.pane ul {
    display: flex;
    flex-direction: column;
    gap: 4px;
    padding: 11px 12px 9px;
    border: 1px solid #fff;
    border-top: 0;
    background: #d6dff7;
    color: var(--link);
}

.pane li {
    display: flex;
    gap: 6px;
    min-height: 16px;
}

.pane.primary h2 {
    background: linear-gradient(90deg, #0f45b4, #1c50c0);
    color: #fff;
}

.pane.primary h2 button {
    background: #3d6fd4;
    box-shadow: 0 0 0 1px #7b9fe8;
    color: #fff;
}

.pane.primary ul {
    background: #eff3ff;
}

/* file list, scrolled part way down */
.files {
    flex: 1;
    min-width: 0;
    overflow: hidden;
    border-top: 1px solid #8e9cae;
    background: #fff;
}

.file-grid {
    display: grid;
    grid-template-columns: repeat(auto-fill, 75px);
    grid-auto-rows: 75px;
    margin-top: -29px;
    padding-left: 1px;
}

.file-grid li {
    display: flex;
    flex-direction: column;
    align-items: center;
    gap: 5px;
    white-space: nowrap;
}

.scrollbar {
    display: flex;
    flex-direction: column;
    width: 16px;
    background: #f5f4ee;
}

.track {
    display: flex;
    flex: 1;
    flex-direction: column;
}

.track::before {
    content: "";
    flex: 193;
}

.track::after {
    content: "";
    flex: 63;
}

.thumb {
    display: grid;
    flex: 190;
    place-items: center;
    border: 1px solid #98b4ee;
    border-radius: 2px;
    background: linear-gradient(90deg, #d3e0fe, #bccffa);
}

.thumb::before {
    content: "";
    width: 6px;
    height: 8px;
    background: repeating-linear-gradient(#eef4fe 0 1px, #8cb0f8 1px 2px);
}

/* taskbar */
.taskbar {
    display: flex;
    height: 30px;
    background: linear-gradient(#3f8cf3 0, #2f6fe8 3px, #245edb 8px, #245edb 24px, #1941a5);
    color: #fff;
}

.start {
    display: flex;
    align-items: center;
    gap: 3px;
    width: 97px;
    padding: 0 0 2px 11px;
    border-radius: 0 10px 10px 0;
    background: linear-gradient(#2f7a30 0, #5fb45c 3px, #3c953c 9px, #388f38 22px, #246a24);
    box-shadow: inset -4px 0 5px #1f661f;
    font: italic bold 17px/22px "Trebuchet MS", "Open Sans", sans-serif;
    text-shadow: 1px 1px 2px #123c12;
}

.start svg {
    width: 19px;
    height: 18px;
}

.tasks {
    display: flex;
    flex: 1;
    gap: 2px;
    min-width: 0;
    padding: 3px 0 2px 10px;
}

.task {
    display: flex;
    flex: 1 1 0;
    align-items: center;
    gap: 3px;
    min-width: 0;
    padding: 0 4px 0 9px;
    border-radius: 2px;
    background: linear-gradient(#5a95fa 0, #3c81f3 4px, #3c81f3 20px, #2f6bdc);
    box-shadow: inset 1px 0 #5b9bfa, inset -1px 0 #2a62d0;
    white-space: nowrap;
}

.task span {
    flex: 1;
    text-align: left;
}

.task.active {
    background: #1e52b7;
    box-shadow: inset 1px 1px 1px #123a8c;
}

.language {
    display: grid;
    place-items: center;
    width: 43px;
}

.tray {
    display: flex;
    align-items: center;
    gap: 3px;
    width: 129px;
    padding-left: 10px;
    border-left: 1px solid #0a3f9c;
    background: linear-gradient(#1bb0f5 0, #149cec 4px, #118ee8 22px, #0d6fc4);
    box-shadow: inset 1px 0 #3fc4fa;
}

.tray time {
    margin-left: 5px;
}
```
